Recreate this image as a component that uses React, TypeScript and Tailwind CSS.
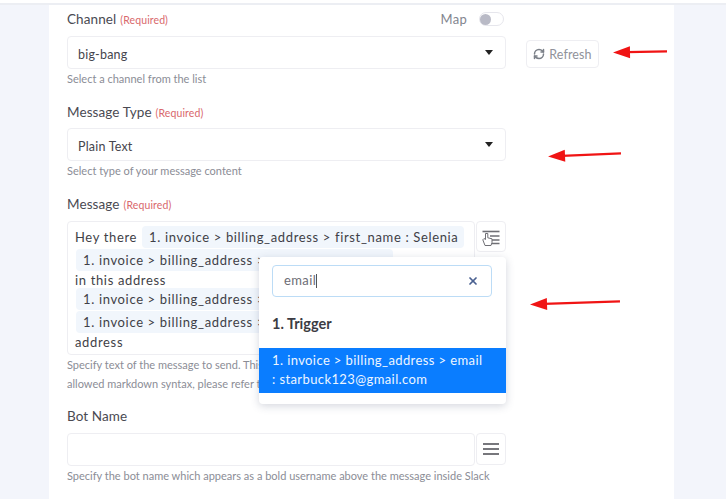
import React from 'react';
import { RefreshCw, X } from 'lucide-react';

const Required = () => <span className="text-[10.5px] text-[#d9686c] ml-1">(Required)</span>;

const Label: React.FC<{ text: string; required?: boolean }> = ({ text, required }) => (
  <div className="h-[20px] leading-[20px] text-[13.5px] tracking-[0.1px] text-[#4a4a52]">
    {text}
    {required && <Required />}
  </div>
);

const Hint: React.FC<{ children: React.ReactNode }> = ({ children }) => (
  <p className="text-[11px] leading-[19px] text-[#8b8d96] whitespace-nowrap">{children}</p>
);

const Select: React.FC<{ value: string }> = ({ value }) => (
  <div className="h-[33px] w-[439px] flex items-center justify-between pl-[10px] pr-[12px] bg-white border border-[#eeeef2] rounded text-[12.5px] tracking-[0.2px] text-[#45454d]">
    <span className="pt-[5px]">{value}</span>
    <span className="w-0 h-0 border-x-[4px] border-x-transparent border-t-[5px] border-t-[#222]" />
  </div>
);

const Chip: React.FC<{ children: React.ReactNode; className?: string }> = ({ children, className }) => (
  <span className={`inline-flex items-center h-[22px] pl-[7px] rounded bg-[#f1f6fc] whitespace-nowrap ${className ?? ''}`}>
    {children}
  </span>
);

const Arrow: React.FC<{ className: string; length: number; tilt: number }> = ({ className, length, tilt }) => (
  <svg className={`absolute ${className}`} width={length} height="16" viewBox={`0 0 ${length} 16`}>
    <g transform={`rotate(${tilt} ${length / 2} 8)`}>
      <path d={`M14 6.8 L${length - 1} 6.8 L${length - 1} 9 L14 9 Z`} fill="#f01414" />
      <path d="M0 8 L17 2 L17 14 Z" fill="#f01414" />
    </g>
  </svg>
);

export default function App() {
  return (
    <div className="relative w-[726px] h-[499px] overflow-hidden bg-[#f3f5fb] font-['Lato','Noto_Sans',sans-serif]">
      <div className="h-[5px] bg-white border-b-2 border-[#eceef3]" />

      {/* Card */}
      <div className="relative ml-[49px] w-[625px] h-[494px] bg-white pl-[18px] pt-[4px]">
        {/* Channel */}
        <div className="flex items-center justify-between w-[437px] h-[20px]">
          <Label text="Channel" required />
          <div className="flex items-center gap-[12px]">
            <span className="pt-[2px] text-[13px] tracking-[0.3px] text-[#83858f]">Map</span>
            <span className="flex items-center w-[25px] h-[14px] rounded-full border border-[#e6e6ec] bg-white">
              <span className="w-[11px] h-[11px] rounded-full bg-[#b9bac6]" />
            </span>
          </div>
        </div>
        <div className="flex items-start mt-[7px]">
          <Select value="big-bang" />
          <button className="ml-[20px] mt-[4px] flex items-center gap-[4px] h-[28px] w-[73px] justify-center border border-[#eeeef2] rounded text-[12.5px] tracking-[0.1px] text-[#90929a]">
            <RefreshCw className="w-[12px] h-[12px] text-[#7b8088]" strokeWidth={3} />
            <span className="pt-[2px]">Refresh</span>
          </button>
        </div>
        <Hint>Select a channel from the list</Hint>

        {/* Message type */}
        <div className="mt-[14px]">
          <Label text="Message Type" required />
        </div>
        <div className="mt-[6px]">
          <Select value="Plain Text" />
        </div>
        <Hint>Select type of your message content</Hint>

        {/* Message */}
        <div className="mt-[14px]">
          <Label text="Message" required />
        </div>
        <div className="flex gap-[1px] mt-[7px] w-[439px] items-start">
          <div className="w-[409px] h-[134px] border border-[#eeeef2] rounded pl-[7px] pt-[4px] text-[13px] tracking-[0.65px] leading-[18px] text-[#3f3f47]">
            <div className="flex items-center gap-[5px] h-[22px]">
              <span>Hey there</span>
              <Chip className="w-[322px]">1. invoice &gt; billing_address &gt; first_name : Selenia</Chip>
            </div>
            <div className="h-[22px] mt-[1px]">
              <Chip className="ml-[1px] w-[317px]">1. invoice &gt; billing_address &gt;</Chip>
            </div>
            <div className="h-[18px]">in this address</div>
            <div className="h-[22px] -mt-[1px]">
              <Chip className="ml-[1px] w-[190px]">1. invoice &gt; billing_address &gt;</Chip>
            </div>
            <div className="h-[22px] mt-[1px]">
              <Chip className="ml-[1px] w-[190px]">1. invoice &gt; billing_address &gt;</Chip>
            </div>
            <div className="h-[18px]">address</div>
          </div>
          <button className="flex items-center justify-center w-[30px] h-[31px] pt-[3px] border border-[#eeeef2] rounded">
            <svg width="18" height="17" viewBox="0 0 18 17" fill="none" stroke="#6f6f75">
              <path d="M0.5 1.5H17.5" strokeWidth="1.6" />
              <path d="M8 6H17.5M9 10H17.5M9 13.5H17.5" strokeWidth="1.5" />
              <path d="M3.5 3.5V9.5L2 8.5L0.8 9.8L3 15.5H9L10 12.5V8.8L5.8 7.8V3.5Z" fill="#fff" strokeWidth="1" />
            </svg>
          </button>
        </div>
        <Hint>Specify text of the message to send. This</Hint>
        <Hint>allowed markdown syntax, please refer t</Hint>

        {/* Bot name */}
        <div className="mt-[13px]">
          <Label text="Bot Name" />
        </div>
        <div className="flex gap-[1px] mt-[7px] w-[439px]">
          <div className="w-[409px] h-[33px] border border-[#eeeef2] rounded" />
          <button className="flex flex-col items-center justify-center gap-[3px] w-[30px] h-[32px] border border-[#eeeef2] rounded">
            <span className="w-[16px] h-[2px] bg-[#77777c]" />
            <span className="w-[16px] h-[2px] bg-[#77777c]" />
            <span className="w-[16px] h-[2px] bg-[#77777c]" />
          </button>
        </div>
        <Hint>Specify the bot name which appears as a bold username above the message inside Slack</Hint>

        {/* Field picker popup */}
        <div className="absolute left-[210px] top-[252px] w-[247px] h-[147px] bg-white rounded shadow-[0_2px_8px_rgba(60,70,100,0.22)] pt-[8px]">
          <div className="flex items-center justify-between ml-[13px] w-[220px] h-[32px] pl-[11px] pr-[12px] border border-[#bcdcf6] rounded text-[13px] tracking-[0.4px] text-[#6d6d75]">
            <span className="flex items-center">
              email<span className="w-px h-[14px] bg-[#555]" />
            </span>
            <X className="w-[12px] h-[12px] text-[#4a6191]" strokeWidth={3.5} />
          </div>
          <div className="ml-[13px] mt-[17px] h-[20px] leading-[20px] text-[14.5px] font-bold text-[#3c3c44]">1. Trigger</div>
          <div className="mt-[14px] h-[45px] bg-[#0a7dff] pl-[13px] text-[13px] leading-[19px] tracking-[0.4px] pt-[3px] text-[#eef6ff]">
            1. invoice &gt; billing_address &gt; email
            <br />: starbuck123@gmail.com
          </div>
        </div>
      </div>

      {/* Annotation arrows */}
      <Arrow className="left-[613px] top-[44px]" length={55} tilt={-1} />
      <Arrow className="left-[548px] top-[147px]" length={74} tilt={-2.4} />
      <Arrow className="left-[530px] top-[295px]" length={91} tilt={-1.9} />
    </div>
  );
}
